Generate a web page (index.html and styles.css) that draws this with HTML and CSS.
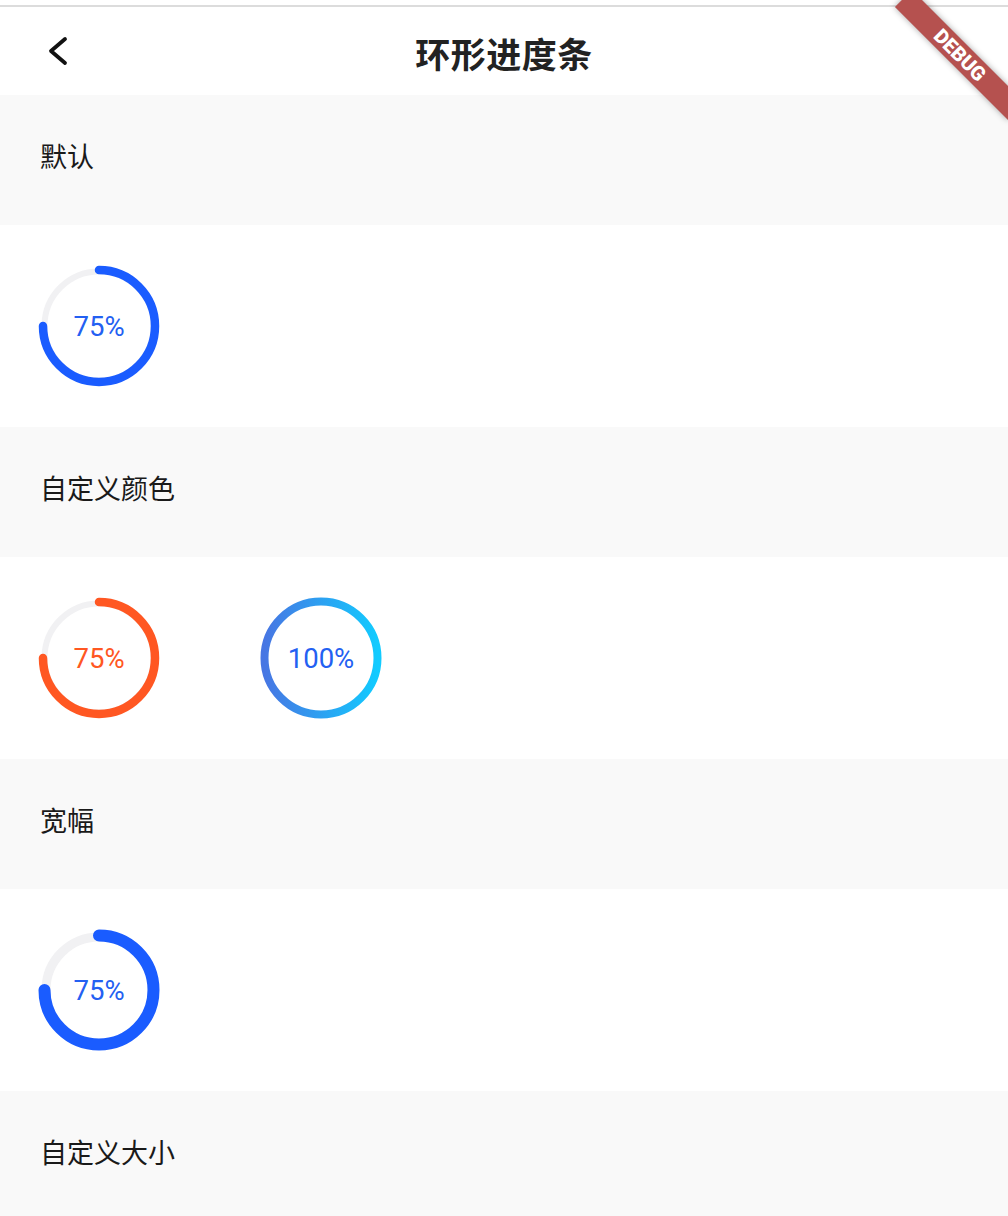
FILE: index.html
```html
<!DOCTYPE html>
<html lang="zh">
<head>
<meta charset="utf-8">
<title>环形进度条</title>
<link rel="stylesheet" href="styles.css">
</head>
<body>
<div class="page">
  <div class="statusline"></div>
  <header class="appbar">
    <div class="back">
      <svg width="28" height="32" viewBox="0 0 28 32"><polyline points="21,4 7,16 21,28" fill="none" stroke="#111" stroke-width="3.8" stroke-linecap="round" stroke-linejoin="round"/></svg>
    </div>
    <h1 class="title">环形进度条</h1>
    <div class="spacer"></div>
  </header>

  <div class="section-title">默认</div>
  <div class="demo-row">
    <div class="ring">
      <svg width="124" height="124" viewBox="0 0 124 124">
        <circle cx="62" cy="62" r="54.5" fill="none" stroke="#f1f1f3" stroke-width="6"/>
        <path d="M 62 6 A 56 56 0 1 1 6 62" fill="none" stroke="#1a5cff" stroke-width="8.5" stroke-linecap="round"/>
      </svg>
      <span class="ring-label blue">75%</span>
    </div>
  </div>

  <div class="section-title">自定义颜色</div>
  <div class="demo-row">
    <div class="ring">
      <svg width="124" height="124" viewBox="0 0 124 124">
        <circle cx="62" cy="62" r="54.5" fill="none" stroke="#f1f1f3" stroke-width="6"/>
        <path d="M 62 6 A 56 56 0 1 1 6 62" fill="none" stroke="#ff5722" stroke-width="8.5" stroke-linecap="round"/>
      </svg>
      <span class="ring-label orange">75%</span>
    </div>
    <div class="ring">
      <svg width="124" height="124" viewBox="0 0 124 124">
        <defs>
          <linearGradient id="g1" x1="0" y1="0" x2="1" y2="0">
            <stop offset="0" stop-color="#4776e3"/>
            <stop offset="1" stop-color="#12cbff"/>
          </linearGradient>
        </defs>
        <circle cx="62" cy="62" r="56.5" fill="none" stroke="url(#g1)" stroke-width="8"/>
      </svg>
      <span class="ring-label blue">100%</span>
    </div>
  </div>

  <div class="section-title">宽幅</div>
  <div class="demo-row">
    <div class="ring">
      <svg width="124" height="124" viewBox="0 0 124 124">
        <circle cx="62" cy="62" r="53" fill="none" stroke="#f1f1f3" stroke-width="9"/>
        <path d="M 62 7.5 A 54.5 54.5 0 1 1 7.5 62" fill="none" stroke="#1a5cff" stroke-width="12" stroke-linecap="round"/>
      </svg>
      <span class="ring-label blue">75%</span>
    </div>
  </div>

  <div class="section-title">自定义大小</div>

  <div class="debug-banner">DEBUG</div>
</div>
</body>
</html>
```

FILE: styles.css
```css
html, body {
  margin: 0;
  padding: 0;
  background: #ffffff;
}

.page {
  position: relative;
  width: 1008px;
  height: 1216px;
  overflow: hidden;
  font-family: "Noto Sans CJK SC", "Noto Sans", Roboto, sans-serif;
  color: #1c1c1c;
}

.statusline {
  height: 5px;
  background: #ffffff;
  border-bottom: 2px solid #dcdcdc;
}

.appbar {
  height: 88px;
  display: grid;
  grid-template-columns: 1fr auto 1fr;
  align-items: center;
  background: #ffffff;
}

.back {
  padding-left: 44px;
  display: flex;
  align-items: center;
  height: 32px;
  margin-top: 0;
}

.back svg {
  display: block;
}

.title {
  margin: 0;
  font-size: 35px;
  font-weight: 700;
  color: #222222;
  line-height: 1;
  letter-spacing: 0.5px;
  padding-top: 2px;
}

.section-title {
  height: 130px;
  background: #f9f9f9;
  padding-left: 40px;
  display: flex;
  align-items: center;
  font-size: 27px;
  color: #1a1a1a;
  padding-bottom: 9px;
  box-sizing: border-box;
}

.demo-row {
  height: 202px;
  display: flex;
  align-items: center;
  gap: 98px;
  padding-left: 37px;
  background: #ffffff;
}

.ring {
  position: relative;
  width: 124px;
  height: 124px;
}

.ring svg {
  display: block;
}

.ring-label {
  position: absolute;
  inset: 0;
  display: flex;
  align-items: center;
  justify-content: center;
  font-family: Roboto, "Noto Sans", sans-serif;
  font-size: 27.5px;
  font-weight: 400;
  padding-top: 1px;
}

.blue {
  color: #2360f2;
}

.orange {
  color: #ff5722;
}

.debug-banner {
  position: absolute;
  left: 880px;
  top: 43px;
  width: 160px;
  height: 24px;
  transform: rotate(45deg);
  background: #b5514f;
  color: #ffffff;
  font-family: Roboto, "DejaVu Sans", sans-serif;
  font-weight: 900;
  font-size: 20px;
  line-height: 24px;
  text-align: center;
  box-shadow: 0 0 6px rgba(0, 0, 0, 0.35);
}
```
